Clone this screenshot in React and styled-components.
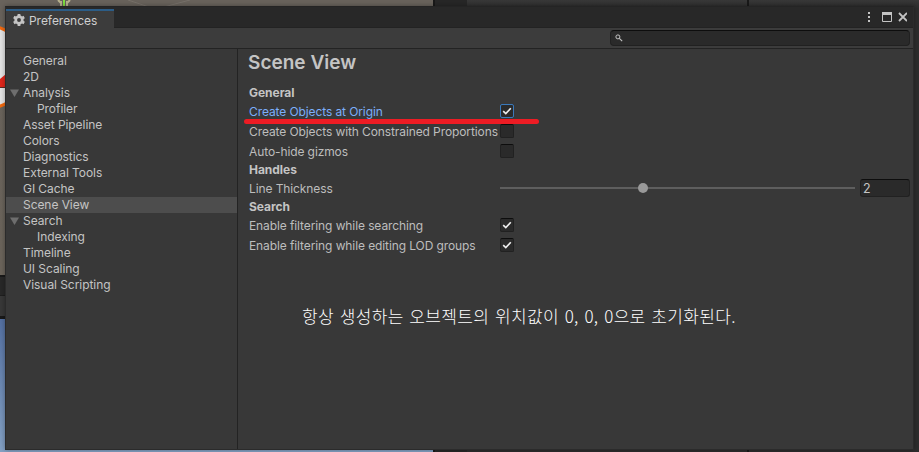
import React from "react";
import styled, { createGlobalStyle } from "styled-components";

const Global = createGlobalStyle`
  * { box-sizing: border-box; }
  html, body { margin: 0; padding: 0; overflow: hidden; background: #2b2b2b; }
  body { font-family: Inter, "Liberation Sans", sans-serif; font-size: 12px; color: #c4c4c4; }
`;

const Desktop = styled.div`
  position: relative;
  width: 919px;
  height: 452px;
  overflow: hidden;
`;

const Editor = styled.div`
  display: grid;
  grid-template-columns: 433px 2px 312px 2px 1fr;
  height: 100%;
  background: #191919;
`;

const ViewColumn = styled.div`
  display: grid;
  grid-template-rows: 275px 2px 18px 1px 20px 3px 1fr;
`;

const SceneArt = styled.svg`
  display: block;
`;

const Strip = styled.div`
  background: ${(p) => p.$color};
`;

const GameView = styled.div`
  background: linear-gradient(#5470a1, #84a1c4);
`;

const SidePanel = styled.div`
  display: grid;
  grid-template-columns: ${(p) => p.$columns || "1fr"};
  background: linear-gradient(#383838, #2d2d2d 8px, #2d2d2d);
`;

const DarkGutter = styled.div`
  background: #272727;
`;

const Window = styled.section`
  position: absolute;
  left: 5px;
  top: 6px;
  width: 909px;
  height: 444px;
  display: flex;
  flex-direction: column;
  background: #383838;
  border: 1px solid #2b2b2b;
  border-top-color: #242424;
  box-shadow: 0 0 5px rgba(0, 0, 0, 0.35);
`;

const TitleBar = styled.header`
  display: flex;
  justify-content: space-between;
  height: 21px;
  padding-top: 2px;
  background: #282828;
  flex: none;
`;

const Tab = styled.div`
  display: flex;
  align-items: center;
  width: 108px;
  height: 20px;
  padding: 0 0 0 7px;
  gap: 4px;
  background: #3c3c3c;
  border-top: 2px solid #2c5d87;
  color: #cfcfcf;
  position: relative;
  letter-spacing: -0.04px;
`;

const WindowControls = styled.div`
  display: flex;
  align-items: center;
  height: 16px;
  padding-right: 6px;
`;

const Toolbar = styled.div`
  display: flex;
  justify-content: flex-end;
  height: 22px;
  margin-top: -1px;
  padding: 2px 3px 0 0;
  background: #3c3c3c;
  border-top: 1px solid #232323;
  border-bottom: 1px solid #232323;
  flex: none;
`;

const SearchBox = styled.label`
  display: flex;
  align-items: center;
  width: 300px;
  height: 16px;
  padding-left: 4px;
  background: #2a2a2a;
  border: 1px solid #212121;
  border-top-color: #0d0d0d;
  border-radius: 4px;
`;

const Body = styled.div`
  display: flex;
  flex: 1;
`;

const Sidebar = styled.nav`
  width: 232px;
  padding-top: 4px;
  border-right: 1px solid #232323;
  flex: none;
`;

const NavItem = styled.div`
  display: flex;
  align-items: center;
  height: 16px;
  padding-left: ${(p) => (p.$child ? 31 : 4)}px;
  background: ${(p) => (p.$selected ? "#4d4d4d" : "transparent")};
  line-height: 16px;
  letter-spacing: -0.06px;
  white-space: nowrap;
`;

const ArrowSlot = styled.span`
  display: flex;
  width: ${(p) => (p.$child ? 0 : 13)}px;
`;

const Content = styled.main`
  flex: 1;
  padding: 1px 3px 0 11px;
`;

const Title = styled.h1`
  margin: 0 0 0 -1px;
  height: 34px;
  font-size: 19px;
  line-height: 26px;
  font-weight: 600;
  letter-spacing: 0.02px;
`;

const SectionTitle = styled.h2`
  margin: 0;
  height: 18px;
  font-size: 12px;
  line-height: 18px;
  font-weight: 700;
  letter-spacing: -0.03px;
`;

const Field = styled.div`
  display: flex;
  align-items: flex-start;
  height: ${(p) => p.$height || 20}px;
  line-height: 20px;
`;

const FieldLabel = styled.span`
  width: 251px;
  flex: none;
  white-space: nowrap;
  color: ${(p) => (p.$active ? "#7baefa" : "#bdbdbd")};
  letter-spacing: -0.1px;
`;

const Checkbox = styled.span`
  display: flex;
  align-items: center;
  justify-content: center;
  width: 14px;
  height: 14px;
  margin-top: 2px;
  background: #2a2a2a;
  border: 1px solid ${(p) => (p.$active ? "#3a79bb" : "#212121")};
  border-top-color: ${(p) => (p.$active ? "#3a79bb" : "#0d0d0d")};
  border-radius: 2px;
`;

const SliderTrack = styled.div`
  display: flex;
  align-items: center;
  width: 355px;
  height: 2px;
  margin-top: 8px;
  padding-left: 138px;
  background: #5e5e5e;
`;

const SliderThumb = styled.span`
  width: 10px;
  height: 10px;
  border-radius: 50%;
  background: #999;
`;

const NumberBox = styled.span`
  width: 50px;
  height: 18px;
  margin-left: 5px;
  padding-left: 2px;
  font-size: 12.5px;
  line-height: 18px;
  background: #2a2a2a;
  border: 1px solid #212121;
  border-top-color: #0d0d0d;
  border-radius: 3px;
`;

const RedUnderline = styled.div`
  position: absolute;
  left: 244px;
  top: 119px;
  width: 295px;
  height: 5px;
  border-radius: 3px;
  background: #ed1c24;
`;

const Note = styled.p`
  position: absolute;
  left: 302px;
  top: 304px;
  margin: 0;
  font-family: "Noto Sans CJK KR", sans-serif;
  font-size: 17px;
  line-height: 24px;
  font-weight: 300;
  letter-spacing: 0.35px;
  word-spacing: 1.6px;
  color: #fff;
  white-space: nowrap;
`;

const Gear = () => (
  <svg width="12" height="12" viewBox="0 0 12 12">
    <circle cx="6" cy="6" r="3.3" fill="none" stroke="#c4c4c4" strokeWidth="2.7" />
    <path d="M6 0v2M6 10v2M.8 3l1.8 1M9.4 8l1.8 1M.8 9l1.8-1M9.4 4l1.8-1" stroke="#c4c4c4" strokeWidth="2.8" />
  </svg>
);

const Arrow = () => (
  <svg width="9" height="8" viewBox="0 0 9 8">
    <path d="M0 .5h9L4.5 8z" fill="#6e6e6e" />
  </svg>
);

const Check = () => (
  <svg width="10" height="8" viewBox="0 0 10 8">
    <path d="M1.2 4.1l2.6 2.5L8.8 1.2" fill="none" stroke="#eee" strokeWidth="1.6" />
  </svg>
);

const SearchIcon = () => (
  <svg width="8" height="8" viewBox="0 0 8 8" fill="none" stroke="#c4c4c4">
    <circle cx="2.9" cy="2.9" r="2" strokeWidth="1" />
    <path d="M4.3 4.3l2.9 2.9" strokeWidth="1.1" />
  </svg>
);

const ControlIcons = () => (
  <svg width="42" height="12" viewBox="0 0 42 12">
    <path d="M3 1h2v2H3zM3 5h2v2H3zM3 9h2v2H3z" fill="#c4c4c4" />
    <path d="M17.5 1.5h9v9h-9z" fill="none" stroke="#c4c4c4" />
    <path d="M17 1h10v3H17z" fill="#c4c4c4" />
    <path d="M34 2l8 8M42 2l-8 8" stroke="#c4c4c4" strokeWidth="1.8" />
  </svg>
);

const Scene = () => (
  <SceneArt width="433" height="275">
    <defs>
      <linearGradient id="ground" x2="0" y2="1">
        <stop offset="0" stopColor="#69635c" />
        <stop offset="1" stopColor="#6b645b" />
      </linearGradient>
    </defs>
    <rect width="433" height="275" fill="url(#ground)" />
    <path d="M128 0l24 8M190 0l-30 8" stroke="#77716a" />
    <circle cx="-14" cy="67" r="41.5" fill="#e4e4e4" stroke="#f2690f" strokeWidth="3" />
    <path d="M0 79l6-5v13H0z" fill="#e0261b" />
    <path d="M0 87.5h6" stroke="#5a2a22" />
    <path d="M58 0l3 3M70 0l-3 3M61 1v5M67 1v5" stroke="#b9b38f" strokeWidth="2" />
    <path d="M64 0v6" stroke="#7fe040" strokeWidth="2" />
  </SceneArt>
);

const categories = [
  { name: "General" },
  { name: "2D" },
  { name: "Analysis", open: true },
  { name: "Profiler", child: true },
  { name: "Asset Pipeline" },
  { name: "Colors" },
  { name: "Diagnostics" },
  { name: "External Tools" },
  { name: "GI Cache" },
  { name: "Scene View", selected: true },
  { name: "Search", open: true },
  { name: "Indexing", child: true },
  { name: "Timeline" },
  { name: "UI Scaling" },
  { name: "Visual Scripting" },
];

const Toggle = ({ label, checked, active, height }) => (
  <Field $height={height}>
    <FieldLabel $active={active}>{label}</FieldLabel>
    <Checkbox $active={active}>{checked && <Check />}</Checkbox>
  </Field>
);

export default function App() {
  return (
    <Desktop>
      <Global />
      <Editor>
        <ViewColumn>
          <Scene />
          <Strip $color="#191919" />
          <Strip $color="#282828" />
          <Strip $color="#1f1f1f" />
          <Strip $color="#383838" />
          <Strip $color="#191919" />
          <GameView />
        </ViewColumn>
        <Strip $color="#191919" />
        <SidePanel $columns="32px 1fr">
          <DarkGutter />
        </SidePanel>
        <Strip $color="#191919" />
        <SidePanel />
      </Editor>
      <Window>
        <TitleBar>
          <Tab>
            <Gear />
            Preferences
          </Tab>
          <WindowControls>
            <ControlIcons />
          </WindowControls>
        </TitleBar>
        <Toolbar>
          <SearchBox>
            <SearchIcon />
          </SearchBox>
        </Toolbar>
        <Body>
          <Sidebar>
            {categories.map((c) => (
              <NavItem key={c.name} $child={c.child} $selected={c.selected}>
                <ArrowSlot $child={c.child}>{c.open && <Arrow />}</ArrowSlot>
                {c.name}
              </NavItem>
            ))}
          </Sidebar>
          <Content>
            <Title>Scene View</Title>
            <SectionTitle>General</SectionTitle>
            <Toggle label="Create Objects at Origin" checked active />
            <Toggle label="Create Objects with Constrained Proportions" />
            <Toggle label="Auto-hide gizmos" height={19} />
            <SectionTitle>Handles</SectionTitle>
            <Field $height={19}>
              <FieldLabel>Line Thickness</FieldLabel>
              <SliderTrack>
                <SliderThumb />
              </SliderTrack>
              <NumberBox>2</NumberBox>
            </Field>
            <SectionTitle>Search</SectionTitle>
            <Toggle label="Enable filtering while searching" checked />
            <Toggle label="Enable filtering while editing LOD groups" checked />
          </Content>
        </Body>
      </Window>
      <RedUnderline />
      <Note>항상 생성하는 오브젝트의 위치값이 0, 0, 0으로 초기화된다.</Note>
    </Desktop>
  );
}
